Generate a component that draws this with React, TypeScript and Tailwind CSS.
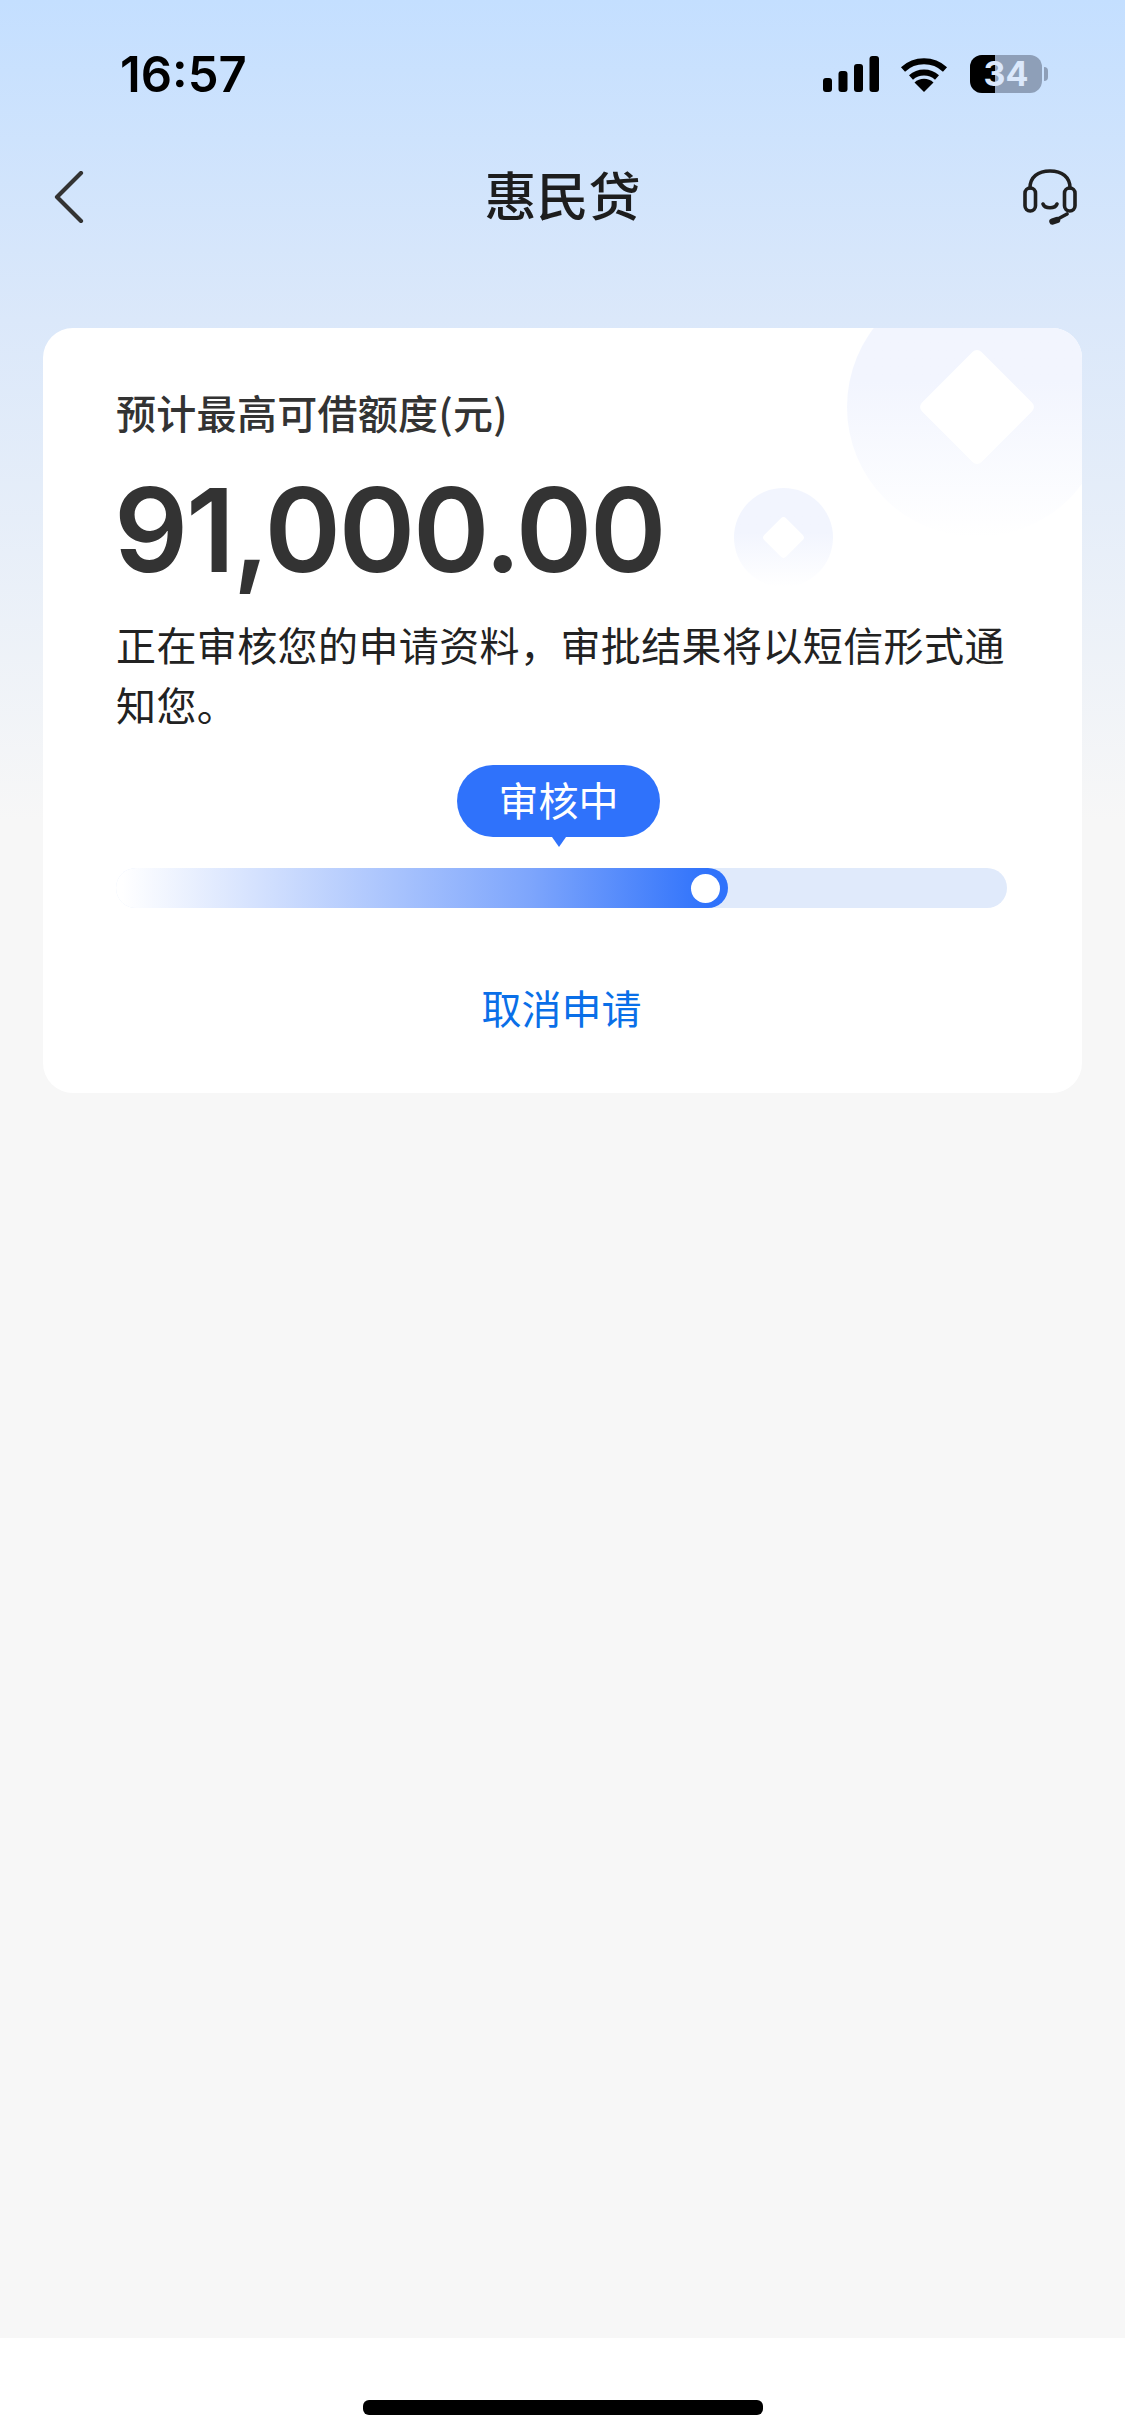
const cjk = "font-['Noto_Sans_CJK_SC',sans-serif]";

function StatusIcons() {
  return (
    <div className="flex items-center">
      <svg width="56" height="36" viewBox="0 0 56 36" fill="#000">
        <rect x="0" y="22" width="9" height="14" rx="3" />
        <rect x="15.5" y="15" width="9" height="21" rx="3" />
        <rect x="31" y="8" width="9" height="28" rx="3" />
        <rect x="46.5" y="0" width="9.5" height="36" rx="3" />
      </svg>
      <svg className="ml-[21px]" width="48" height="36" viewBox="0 0 48 36" fill="none">
        <path d="M3 13.5A31 31 0 0 1 45 13.5" stroke="#000" strokeWidth="6" />
        <path d="M11 21.5A19.5 19.5 0 0 1 37 21.5" stroke="#000" strokeWidth="6" />
        <path d="M24 36L14.5 26.5A14 14 0 0 1 33.5 26.5Z" fill="#000" />
      </svg>
      <div className="ml-[22px] relative w-[72px] h-[38px] rounded-[12px] bg-[#8e9fb8]">
        <div className="w-[25px] h-full rounded-l-[12px] bg-black" />
        <span className="absolute inset-0 flex items-center justify-center font-['Inter',sans-serif] font-bold text-[34px] leading-none text-[#dbe8fb]">
          34
        </span>
      </div>
      <div className="ml-[2px] w-[4px] h-[14px] rounded-r-full bg-[#8e9fb8]" />
    </div>
  );
}

function Headset() {
  return (
    <svg width="54" height="57" viewBox="0 0 54 57" fill="none" stroke="#1f1f1f" strokeWidth="3.6" strokeLinecap="round">
      <path d="M7 19C7 8 15 2 27 2S47 8 47 19" />
      <rect x="2" y="19" width="10.5" height="23" rx="5.2" />
      <rect x="41.5" y="19" width="10.5" height="23" rx="5.2" />
      <path d="M20 35C22 40 32 40 34 35" />
      <path d="M44 45L33 51" />
      <path d="M29.5 52.5L34 51" strokeWidth="6.5" />
    </svg>
  );
}

function Decorations() {
  return (
    <>
      <div className="absolute left-[804px] top-[-51px] w-[260px] h-[260px] rounded-full bg-linear-to-b from-[#f2f5fe] from-40% to-white to-100% flex items-center justify-center">
        <div className="w-[84px] h-[84px] rotate-45 rounded-[6px] bg-white" />
      </div>
      <div className="absolute left-[691px] top-[160px] w-[99px] h-[99px] rounded-full bg-linear-to-b from-[#f2f5fe] from-45% to-white to-100% flex items-center justify-center">
        <div className="w-[31px] h-[31px] rotate-45 rounded-[4px] bg-white" />
      </div>
    </>
  );
}

export default function App() {
  return (
    <div className={`${cjk} w-[1125px] h-[2435px] flex flex-col overflow-hidden bg-[linear-gradient(180deg,#c4dfff_0px,#dbe8fa_320px,#f7f7f7_820px)]`}>
      <div className="flex items-center justify-between h-[38px] mt-[55px] pl-[120px] pr-[77px]">
        <span className="font-['Inter',sans-serif] font-semibold text-[49px] leading-none text-black">16:57</span>
        <StatusIcons />
      </div>

      <div className="grid grid-cols-[1fr_auto_1fr] items-center h-[100px] mt-[54px] pl-[54px] pr-[48px]">
        <svg width="30" height="52" viewBox="0 0 30 52" fill="none" stroke="#333" strokeWidth="4.2" strokeLinecap="round" strokeLinejoin="round">
          <path d="M27 2L3 26L27 50" />
        </svg>
        <h1 className="text-[52px] font-medium leading-none text-[#1d1d1d] mt-[-6px] translate-x-[-3px]">惠民贷</h1>
        <div className="flex justify-end">
          <Headset />
        </div>
      </div>

      <main className="flex-1 px-[43px] pt-[81px]">
        <section className="relative overflow-hidden rounded-[30px] bg-white pl-[73px] pr-[75px] pt-[54px] pb-[56px]">
          <Decorations />
          <div className="relative">
            <p className="text-[40px] leading-[60px] tracking-[0.3px] text-[#333] font-medium">预计最高可借额度(元)</p>
            <p className="mt-[28px] ml-[-2px] font-['Inter',sans-serif] font-semibold text-[116px] leading-[120px] tracking-[-2.2px] text-[#333]">91,000.00</p>
            <p className="mt-[24px] text-[40px] leading-[60px] tracking-[0.4px] text-[#222]">
              正在审核您的申请资料，审批结果将以短信形式通知您。
            </p>

            <div className="flex justify-center mt-[30px]">
              <div className="relative w-[203px] h-[72px] mt-[1px] pb-[4px] rounded-full bg-[#2f72fb] flex items-center justify-center text-[40px] leading-none text-white ml-[-6px]">
                审核中
                <div className="absolute left-1/2 -translate-x-1/2 top-full w-0 h-0 border-x-[7px] border-x-transparent border-t-[10px] border-t-[#2f72fb]" />
              </div>
            </div>

            <div className="mt-[31px] h-[40px] rounded-full bg-[#e0eafb] overflow-hidden">
              <div className="w-[612px] h-full rounded-r-full bg-[linear-gradient(90deg,#ffffff_1%,#7da5fc_68%,#2f72fb_97%)] flex items-center justify-end pr-[8px]">
                <div className="w-[29px] h-[29px] rounded-full bg-white" />
              </div>
            </div>

            <p className="mt-[69px] text-center text-[40px] leading-[60px] text-[#0a6fe8]">取消申请</p>
          </div>
        </section>
      </main>

      <div className="h-[97px] bg-white pt-[62px] flex justify-center">
        <div className="w-[400px] h-[15px] rounded-[6px] bg-black" />
      </div>
    </div>
  );
}
